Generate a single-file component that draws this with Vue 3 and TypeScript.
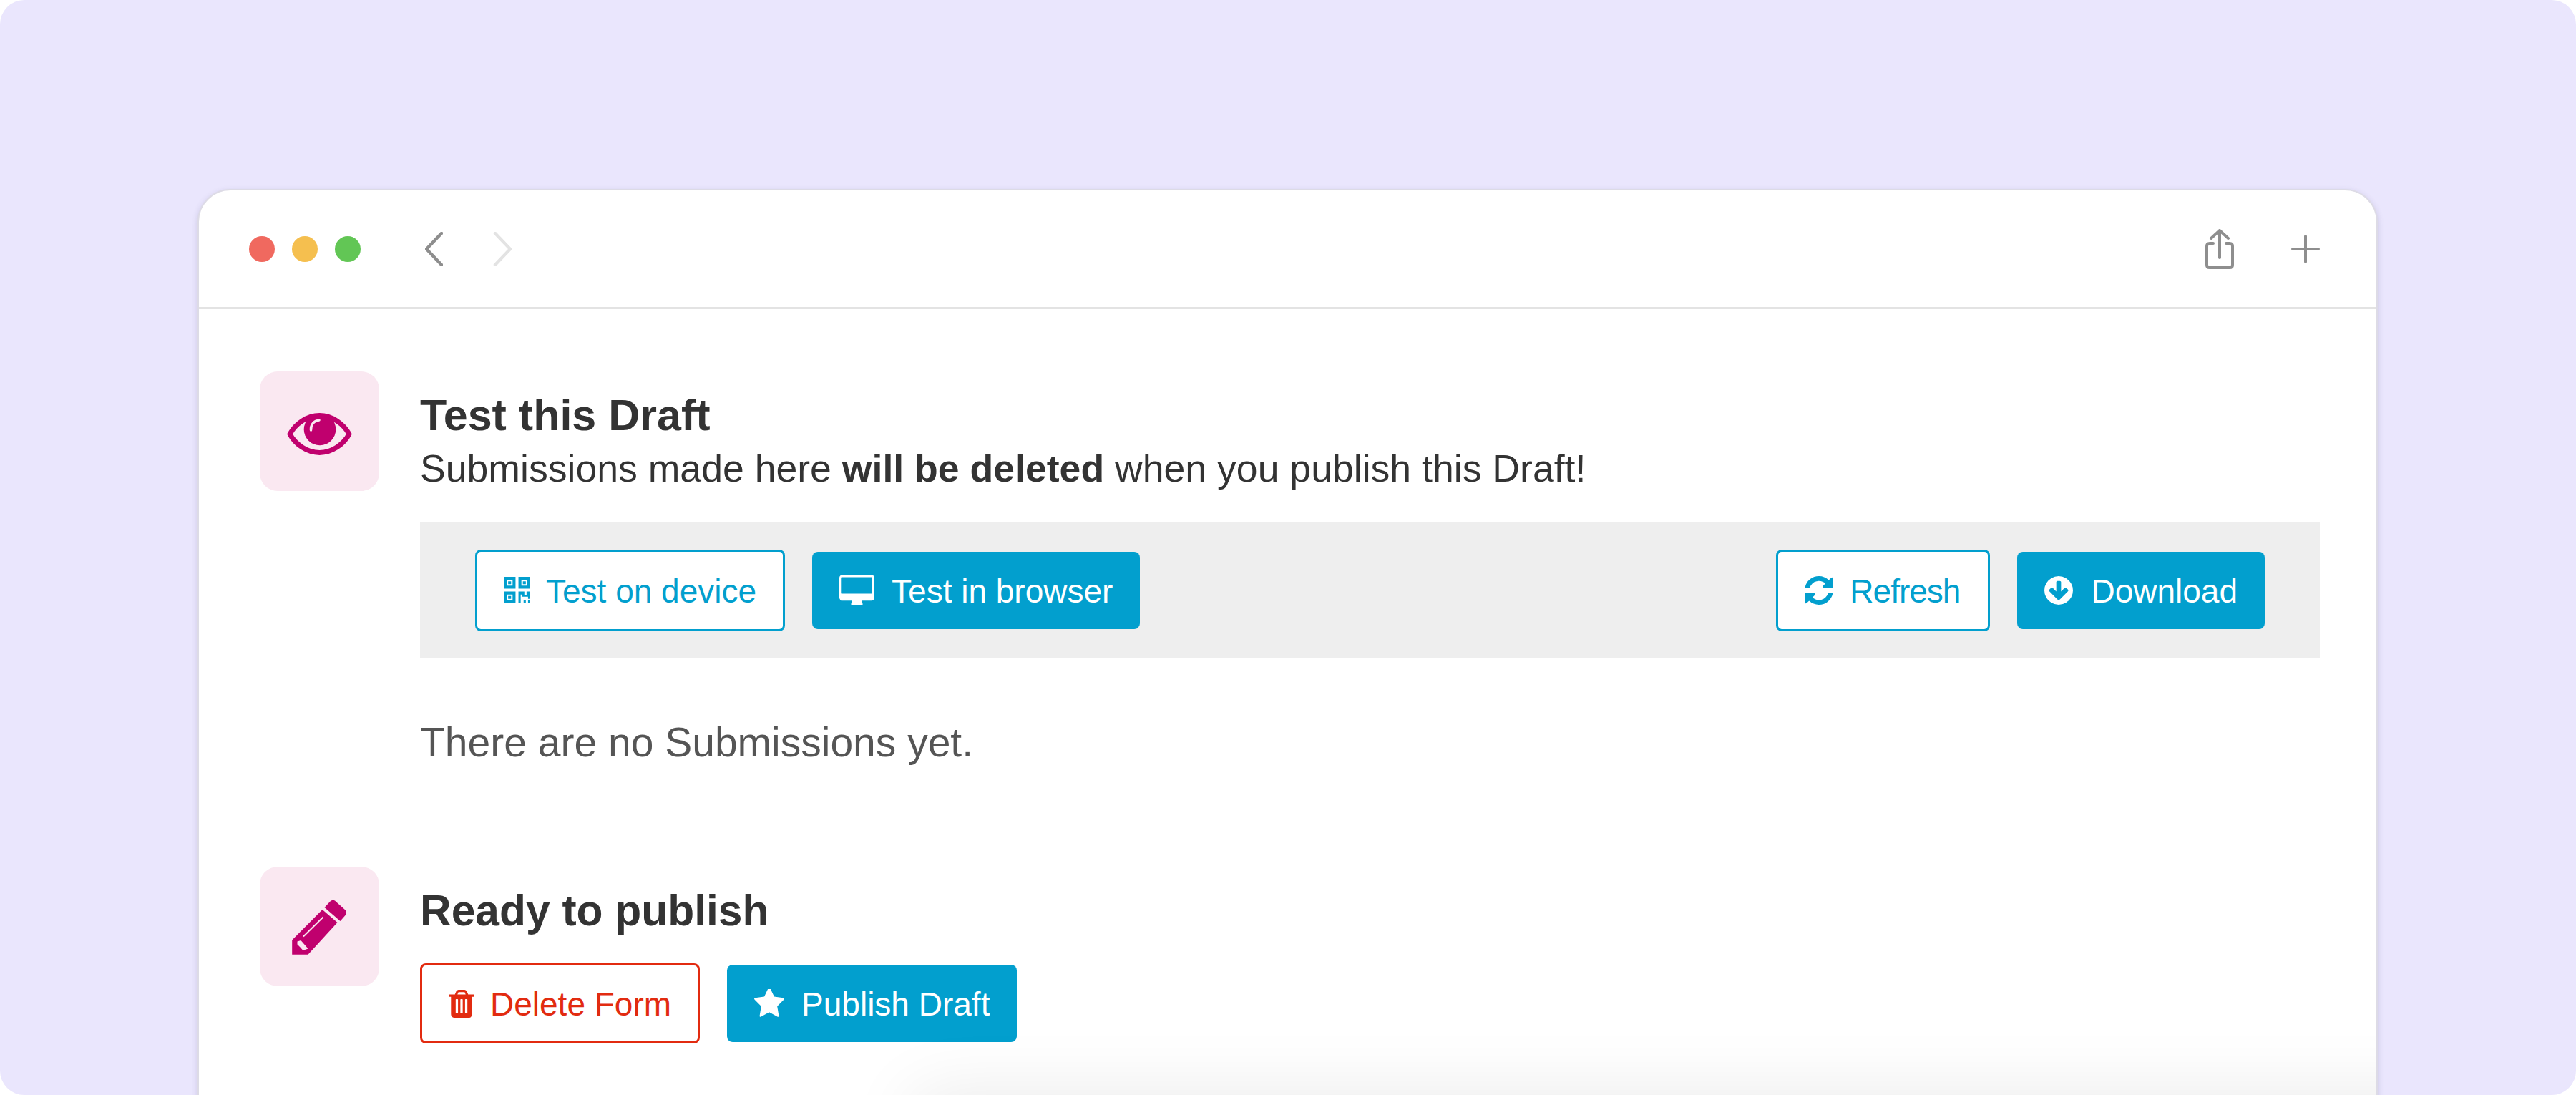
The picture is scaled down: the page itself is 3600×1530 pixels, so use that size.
<script setup lang="ts">
const trash = 'M704 1376v-704q0-14-9-23t-23-9h-64q-14 0-23 9t-9 23v704q0 14 9 23t23 9h64q14 0 23-9t9-23zm256 0v-704q0-14-9-23t-23-9h-64q-14 0-23 9t-9 23v704q0 14 9 23t23 9h64q14 0 23-9t9-23zm256 0v-704q0-14-9-23t-23-9h-64q-14 0-23 9t-9 23v704q0 14 9 23t23 9h64q14 0 23-9t9-23zm-544-992h448l-48-117q-7-9-17-11h-317q-10 2-17 11zm928 32v64q0 14-9 23t-23 9h-96v948q0 83-47 143.500t-113 60.500h-832q-66 0-113-58.500t-47-141.500v-952h-96q-14 0-23-9t-9-23v-64q0-14 9-23t23-9h309l70-167q15-37 54-63t79-26h320q40 0 79 26t54 63l70 167h309q14 0 23 9t9 23z'
const star = 'M1728 647q0 22-26 48l-363 354 86 500q1 7 1 20 0 21-10.500 35.500t-30.500 14.500q-19 0-40-12l-449-236-449 236q-22 12-40 12-21 0-31.500-14.500t-10.500-35.500q0-6 2-20l86-500-364-354q-25-27-25-48 0-37 56-46l502-73 225-455q19-41 49-41t49 41l225 455 502 73q56 9 56 46z'
const refresh = 'M1639 1056q0 5-1 7-64 268-268 434.500t-478 166.500q-146 0-282.500-55t-243.500-157l-129 129q-19 19-45 19t-45-19-19-45v-448q0-26 19-45t45-19h448q26 0 45 19t19 45-19 45l-137 137q71 66 161 102t187 36q134 0 250-65t186-179q11-17 53-117 8-23 30-23h192q13 0 22.500 9.500t9.500 22.500zm25-800v448q0 26-19 45t-45 19h-448q-26 0-45-19t-19-45 19-45l138-138q-148-137-349-137-134 0-250 65t-186 179q-11 17-53 117-8 23-30 23h-199q-13 0-22.500-9.500t-9.500-22.500v-7q65-268 270-434.500t480-166.500q146 0 284 55.500t245 156.500l130-129q19-19 45-19t45 19 19 45z'
const down = 'M1412 897q0-27-18-45l-91-91q-18-18-45-18t-45 18l-189 189v-502q0-26-19-45t-45-19h-128q-26 0-45 19t-19 45v502l-189-189q-19-19-45-19t-45 19l-91 91q-18 18-18 45t18 45l362 362 91 91q18 18 45 18t45-18l91-91 362-362q18-18 18-45zm252-1q0 209-103 385.500t-279.500 279.500-385.500 103-385.500-103-279.500-279.500-103-385.500 103-385.500 279.500-279.500 385.500-103 385.500 103 279.500 279.500 103 385.500z'
const desktop = 'M160 0h1600q66 0 113 47t47 113v1088q0 66-47 113t-113 47h-544q0 37 16 77.500t32 71 16 43.500q0 26-19 45t-45 19h-512q-26 0-45-19t-19-45q0-14 16-44t32-70 16-78h-544q-66 0-113-47t-47-113v-1088q0-66 47-113t113-47zM160 128q-13 0-22.500 9.500t-9.500 22.500v832q0 13 9.500 22.500t22.500 9.500h1600q13 0 22.500-9.500t9.500-22.500v-832q0-13-9.500-22.500t-22.500-9.500z'
</script>

<template>
  <div class="page">
    <div class="window">
      <header class="titlebar">
        <div class="lights">
          <span class="light red"></span>
          <span class="light yellow"></span>
          <span class="light green"></span>
        </div>
        <div class="nav">
          <svg width="25" height="48" viewBox="0 0 25 48" class="chev"><path d="M23 2 2 24l21 22" stroke="#8e8e8e" /></svg>
          <svg width="26" height="48" viewBox="0 0 26 48" class="chev"><path d="M3 2l21 22L3 46" stroke="#e3e3e3" /></svg>
        </div>
        <div class="tools">
          <svg width="40" height="56" viewBox="0 0 40 56" class="tool">
            <path d="M11 20H6q-4 0-4 4v26q0 4 4 4h28q4 0 4-4V24q0-4-4-4h-5" />
            <path d="M20 2v38M8 13 20 2l12 11" />
          </svg>
          <svg width="40" height="40" viewBox="0 0 40 40" class="tool"><path d="M20 2v36M2 20h36" /></svg>
        </div>
      </header>

      <main class="content">
        <section class="step">
          <div class="badge">
            <svg class="eye" width="91" height="59" viewBox="0 0 91 59">
              <path class="ring" d="M4 29.500C12 15 28 3.500 45.500 3.500 63 3.500 79 15 87 29.500 79 44 63 55.500 45.500 55.500 28 55.500 12 44 4 29.500Z" />
              <circle cx="46" cy="23" r="22.300" />
              <path class="glint" d="M33.500 24C33 17 37 11 45 10" />
            </svg>
          </div>
          <div class="step-body">
            <h2 class="title">Test this Draft</h2>
            <p class="sub">Submissions made here <b>will be deleted</b> when you publish this Draft!</p>
            <div class="bar">
              <div class="group">
                <button class="btn outline">
                  <svg width="37" height="37" viewBox="0 0 36 36">
                    <path fill-rule="evenodd" d="M0 0h16v16H0zM4 4v8h8V4zM20 0h16v16H20zM24 4v8h8V4zM0 20h16v16H0zM4 24v8h8v-8z" />
                    <path d="M6 6h4v4H6zM26 6h4v4h-4zM6 26h4v4H6zM20 20h8v5h3v-5h5v10h-3v-3h-8v-3h-2v13h-3zM27 32h3v3h-3zM33 32h3v3h-3z" />
                  </svg>
                  <span>Test on device</span>
                </button>
                <button class="btn solid">
                  <svg width="49" height="43" viewBox="0 0 1920 1664"><path fill-rule="evenodd" :d="desktop" /></svg>
                  <span>Test in browser</span>
                </button>
              </div>
              <div class="group">
                <button class="btn outline refresh">
                  <svg width="40" height="40" viewBox="128 128 1536 1536"><path :d="refresh" /></svg>
                  <span class="tight">Refresh</span>
                </button>
                <button class="btn solid wide">
                  <svg width="40" height="40" viewBox="128 128 1536 1536"><path :d="down" /></svg>
                  <span>Download</span>
                </button>
              </div>
            </div>
            <p class="empty">There are no Submissions yet.</p>
          </div>
        </section>

        <section class="step second">
          <div class="badge">
            <svg class="pencil" width="100" height="100" viewBox="1.500 -0.500 100 100">
              <path d="M12.700 68 55 25.500 76 43.500 35 88.300H12.700Z" />
              <path d="M58 22.500 66 14Q69 11 72.500 13L87 26Q90 30 87 33.500L80 41.500Z" />
              <path class="slit" d="M28.500 63 56 36" />
              <path class="notch" d="M20 70 25 68.500 35 80 28 82.500 24 78 20 74Z" />
            </svg>
          </div>
          <div class="step-body">
            <h2 class="title ready">Ready to publish</h2>
            <div class="group actions">
              <button class="btn danger">
                <svg width="36" height="39" viewBox="192 128 1408 1536" preserveAspectRatio="none"><path :d="trash" /></svg>
                <span>Delete Form</span>
              </button>
              <button class="btn solid">
                <svg width="42" height="40" viewBox="64 128 1664 1536" preserveAspectRatio="none"><path :d="star" /></svg>
                <span>Publish Draft</span>
              </button>
            </div>
          </div>
        </section>
      </main>
      <div class="fade"></div>
    </div>
  </div>
</template>

<style>
html, body { margin: 0; background: #fff; }
</style>

<style scoped>
.page {
  box-sizing: border-box;
  width: 3600px;
  height: 1530px;
  padding: 264px 277px 0 276px;
  background: #eae6fd;
  border-radius: 34px;
  overflow: hidden;
  font-family: "Liberation Sans", Arial, sans-serif;
}
.window {
  position: relative;
  box-sizing: border-box;
  height: 1320px;
  background: #fff;
  border: 2px solid #dddbe6;
  border-radius: 46px 46px 0 0;
  box-shadow: 0 3px 9px rgba(70, 65, 110, 0.2);
  overflow: hidden;
}
.titlebar {
  display: flex;
  align-items: center;
  height: 163px;
  padding: 0 79px 0 70px;
  border-bottom: 3px solid #e3e3e3;
}
.lights { display: flex; gap: 24px; }
.light { width: 36px; height: 36px; border-radius: 50%; }
.red { background: #f0695f; }
.yellow { background: #f5bf4f; }
.green { background: #62c655; }
.nav { display: flex; gap: 70px; margin-left: 90px; }
.chev path { fill: none; stroke-width: 4.5; stroke-linecap: round; stroke-linejoin: round; }
.tools { display: flex; align-items: center; gap: 80px; margin-left: auto; }
.tool { display: block; }
.tool path { fill: none; stroke: #8e8e8e; stroke-width: 4; stroke-linecap: round; stroke-linejoin: round; }
.content { padding: 87px 79px 0 85px; }
.step { display: flex; gap: 57px; align-items: flex-start; }
.second { margin-top: 140px; }
.badge {
  display: flex;
  flex: none;
  align-items: center;
  justify-content: center;
  width: 167px;
  height: 167px;
  border-radius: 25px;
  background: #fae8f1;
}
.badge svg { fill: #c0006e; }
.eye { margin-top: 7px; }
.ring { fill: none; stroke: #c0006e; stroke-width: 7; stroke-linejoin: round; }
.glint { fill: none; stroke: #fae8f1; stroke-width: 3.5; stroke-linecap: round; }
.slit { fill: none; stroke: #fae8f1; stroke-width: 1.8; }
.badge svg .notch { fill: #fae8f1; }
.step-body { flex: 1; min-width: 0; }
.title {
  margin: 25px 0 0;
  font-size: 61px;
  line-height: 72px;
  font-weight: 700;
  color: #333;
}
.ready { font-size: 60.5px; }
.sub {
  margin: 2px 0 0;
  font-size: 53.6px;
  line-height: 72px;
  color: #333;
}
.bar {
  display: flex;
  align-items: center;
  justify-content: space-between;
  height: 191px;
  margin-top: 39px;
  padding: 0 77px;
  background: #eee;
}
.group { display: flex; align-items: center; gap: 38px; }
.btn {
  display: inline-flex;
  align-items: center;
  gap: 22px;
  box-sizing: border-box;
  height: 108px;
  padding: 0 38px;
  border: none;
  border-radius: 8px;
  font: 400 46px/1 "Liberation Sans", Arial, sans-serif;
  background: #029fce;
  color: #fff;
}
.btn span { padding-top: 2px; }
.btn svg { display: block; flex: none; fill: currentColor; }
.btn.solid { gap: 24px; }
.btn.wide { gap: 25px; }
.btn.refresh { gap: 23px; }
.tight { letter-spacing: -1px; margin-right: 2px; }
.outline {
  height: 114px;
  padding: 0 37px;
  background: #fff;
  border: 3.5px solid #029fce;
  color: #029fce;
}
.danger {
  height: 112px;
  padding: 0 37px;
  background: #fff;
  border: 3.5px solid #e22b10;
  color: #e22b10;
}
.empty {
  margin: 83px 0 0;
  font-size: 57px;
  line-height: 68px;
  color: #555;
}
.actions { margin-top: 38px; }
.fade {
  position: absolute;
  top: 1264px;
  left: 1000px;
  right: -200px;
  height: 100px;
  background: #000;
  box-shadow: 0 0 100px rgba(0, 0, 0, 0.09);
}
</style>
